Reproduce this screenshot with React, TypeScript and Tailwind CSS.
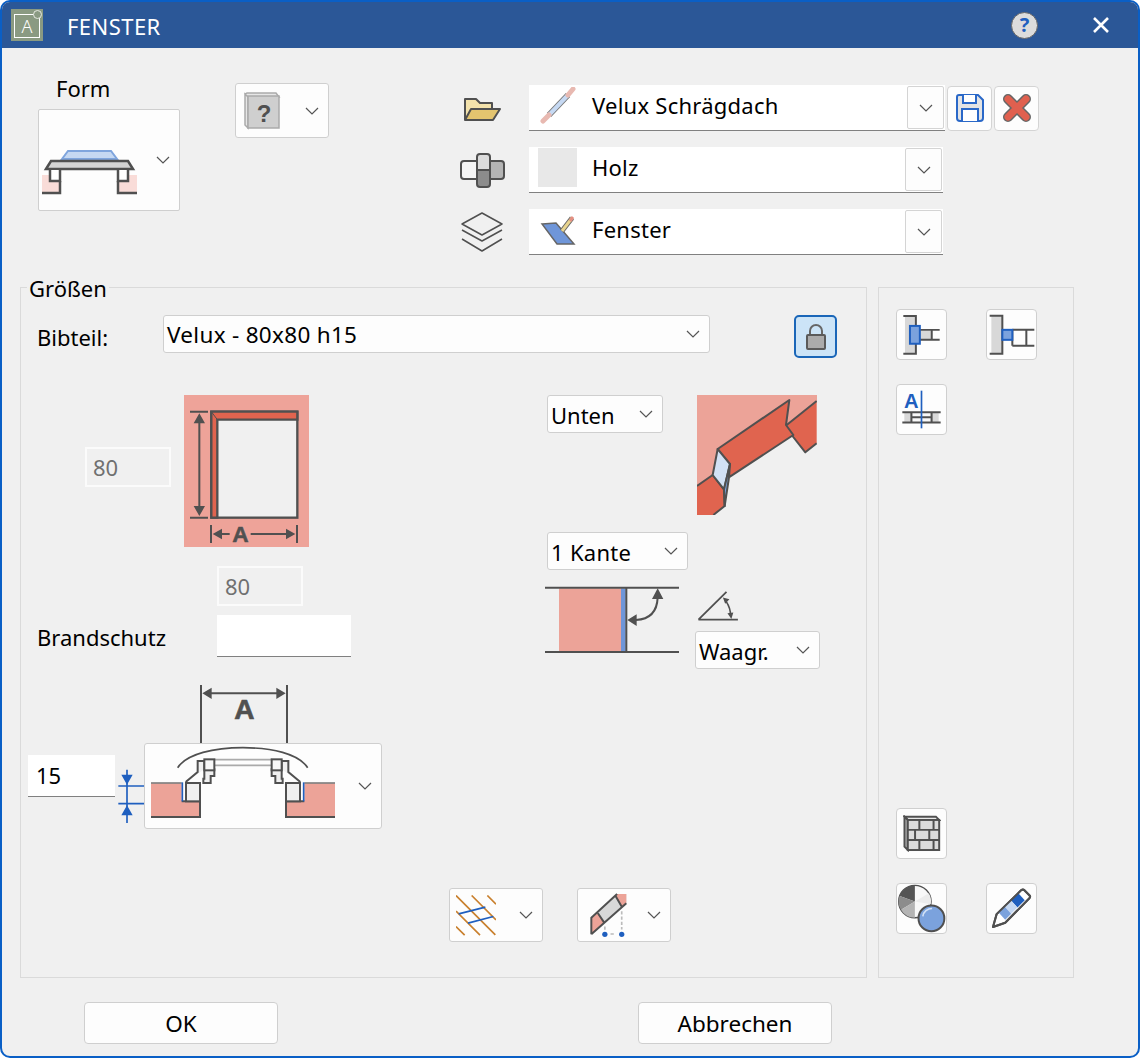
import type { ReactNode } from 'react'

const Chevron = ({ className = '' }: { className?: string }) => (
  <svg viewBox="0 0 14 8" className={`w-[14px] h-[8px] shrink-0 ${className}`} fill="none" stroke="#555" strokeWidth="1.2">
    <path d="M1 1l6 6 6-6" />
  </svg>
)

function Select({ label, className }: { label: string; className: string }) {
  return (
    <div className={`flex items-center justify-between bg-[#fdfdfd] border border-[#cfcfcf] rounded-[3px] pl-[3px] ${className}`}>
      <span className="pt-[1px]">{label}</span>
      <Chevron />
    </div>
  )
}

function IconCombo({ children, className }: { children: ReactNode; className: string }) {
  return (
    <div className={`flex items-center justify-between bg-[#fdfdfd] border border-[#cfcfcf] rounded-[3px] ${className}`}>
      {children}
      <Chevron />
    </div>
  )
}

function Field({ icon, label, wide }: { icon: ReactNode; label: string; wide?: boolean }) {
  return (
    <div className={`flex items-center bg-white border-b border-[#808080] h-[46px] ${wide ? 'w-[416px]' : 'w-[414px]'}`}>
      <div className="w-[63px] flex pl-[9px]">{icon}</div>
      <span className="mb-[6px] tracking-[0.25px]">{label}</span>
      <div className="ml-auto w-[37px] h-[43px] flex items-center justify-center border border-[#d4d4d4] rounded-[2px] bg-[#fdfdfd] mr-[1px]">
        <Chevron />
      </div>
    </div>
  )
}

function ToolButton({ children }: { children: ReactNode }) {
  return (
    <button className="w-[51px] h-[51px] flex items-center justify-center bg-[#fdfdfd] border border-[#cfcfcf] rounded-[4px]">
      {children}
    </button>
  )
}

const disabledInput = 'w-[86px] h-[40px] bg-[#f0f0f0] border-2 border-[#fbfbfb] px-[6px] text-[#707070] outline-none'
const whiteInput = 'bg-white border-b border-[#808080] outline-none'
const dark = '#505050'

const WindowForm = () => (
  <svg viewBox="42 148 96 48" className="w-[96px] h-[48px]" fill="none" stroke={dark} strokeWidth="2.5">
    <rect x="42" y="175" width="18" height="18" fill="#f9dcd8" stroke="none" />
    <rect x="119" y="175" width="18" height="18" fill="#f9dcd8" stroke="none" />
    <path d="M62 159l6-8h43l6 8z" fill="#c5d8f2" stroke="#7fa5dd" strokeWidth="2" />
    <path d="M46 169l5-8h77l5 8z" fill="#d4d4d4" />
    <path d="M50 170v11h10v-11M118 170v11h10v-11" fill="#fff" />
    <path d="M60 181v12H42M118 181v12h19" />
  </svg>
)

const QuestionCube = () => (
  <svg viewBox="0 0 38 38" className="w-[38px] h-[38px]">
    <path d="M1 2l3 3h31l-3-4H3z M1 2v31l3 3V5z" fill="#e6e6e6" stroke="#aaa" strokeWidth="1.5" />
    <rect x="4" y="4" width="31" height="32" fill="#cfcfcf" stroke="#aaa" strokeWidth="1.5" />
    <text x="20" y="30" textAnchor="middle" fontFamily="Liberation Sans" fontWeight="700" fontSize="24" fill="#505050">?</text>
  </svg>
)

const FolderIcon = () => (
  <svg viewBox="462 97 38 26" className="w-[38px] h-[26px]" stroke={dark} strokeWidth="2" strokeLinejoin="round">
    <path d="M464 120V99h11l4 4h12v6" fill="#f3e2ab" />
    <path d="M464 120l6-11h29l-7 11z" fill="#e3c46f" />
  </svg>
)

const MaterialIcon = () => (
  <svg viewBox="458 151 46 37" className="w-[46px] h-[37px]" stroke={dark} strokeWidth="2">
    <path d="M476 160h-13a3 3 0 0 0-3 3v12a3 3 0 0 0 3 3h13z" fill="#f4f4f4" />
    <path d="M488 160h12a3 3 0 0 1 3 3v12a3 3 0 0 1-3 3h-12z" fill="#b4b4b4" />
    <path d="M476 169v-13a3 3 0 0 1 3-3h7a3 3 0 0 1 3 3v13z" fill="#dcdcdc" />
    <path d="M476 169v14a3 3 0 0 0 3 3h7a3 3 0 0 0 3-3v-14z" fill="#8c8c8c" />
  </svg>
)

const LayersIcon = () => (
  <svg viewBox="460 213 42 40" className="w-[42px] h-[40px]" fill="none" stroke={dark} strokeWidth="1.5" strokeLinejoin="round">
    <path d="M481 214l20 11-20 11-20-11z" />
    <path d="M461 231l20 11 20-11" />
    <path d="M461 240l20 12 20-12" />
  </svg>
)

const WandIcon = () => (
  <svg viewBox="540 87 38 38" className="w-[38px] h-[38px] ml-[2px] -mt-[4px]">
    <path d="M549 115l19-20" stroke="#777" strokeWidth="6" />
    <path d="M549 115l19-20" stroke="#c6d9f3" strokeWidth="4" />
    <path d="M543 121l6-6M568 95l5-6" stroke="#e8b9b1" strokeWidth="5" strokeLinecap="round" />
  </svg>
)

const LayerPen = () => (
  <svg viewBox="540 210 38 32" className="w-[38px] h-[32px] ml-[2px] -mt-[4px]">
    <path d="M542 220l14-1 18 21h-17z" fill="#6f96d9" stroke="#666" strokeWidth="1.5" />
    <path d="M562 227l10-13" stroke="#666" strokeWidth="5" />
    <path d="M562 227l10-13" stroke="#e8d48f" strokeWidth="3" />
    <path d="M570 217l3-4" stroke="#e58f82" strokeWidth="3" />
  </svg>
)

const LockIcon = () => (
  <svg viewBox="0 0 20 26" className="w-[20px] h-[26px]">
    <path d="M4 11V7a6 6 0 0 1 12 0v4" fill="none" stroke="#666" strokeWidth="2" />
    <rect x="1" y="11" width="18" height="14" rx="1" fill="#ababab" stroke="#5a5a5a" strokeWidth="2" />
  </svg>
)

const SizePicture = () => (
  <svg viewBox="492 45 375 456" className="w-[125px] h-[152px] shrink-0">
    <rect x="492" y="45" width="375" height="456" fill="#eea399" />
    <rect x="574" y="95" width="258" height="318" fill="#f0f0f0" stroke={dark} strokeWidth="7" />
    <path d="M574 95h258v24H592v294h-18z" fill="#e0644f" stroke={dark} strokeWidth="7" />
    <path d="M574 95l18 24" stroke={dark} strokeWidth="3" />
    <path d="M510 95h54M510 413h54M538 120v270M573 435v54M831 435v54M605 462h24M692 462h110" stroke={dark} strokeWidth="6" fill="none" />
    <path d="M538 100l-17 30h34zM538 408l-17-30h34zM578 462l28-16v32zM826 462l-28-16v32z" fill={dark} />
    <text x="661" y="486" textAnchor="middle" fontFamily="Liberation Sans" fontWeight="700" fontSize="68" fill={dark} stroke={dark} strokeWidth="1.5">A</text>
  </svg>
)

const EdgePicture = () => (
  <svg viewBox="501 45 360 360" className="w-[120px] h-[120px] shrink-0" stroke={dark} strokeWidth="6" strokeLinejoin="round">
    <path d="M501 45h360v20l-90 70-170 117-37-45-15 78-48 33z" fill="#eca398" stroke="none" />
    <path d="M770 135l90-70v125l-34 27-41-52z" fill="#e0644f" stroke="none" />
    <path d="M770 135l90-72M860 190l-34 27-41-52" fill="none" />
    <path d="M563 207L778 60l-10 75 22 30-190 125z" fill="#e0644f" />
    <path d="M501 318l47-33 34 43 2 50-34 27h-49z" fill="#e0644f" stroke="none" />
    <path d="M501 318l47-33 34 43 2 50-34 27" fill="none" />
    <path d="M563 207l37 45-18 76-34-43z" fill="#d2e1f5" />
    <path d="M600 252l-3 40-13 86-2-50z" fill="#7ba2dd" />
  </svg>
)

const AngleDiagram = () => (
  <svg viewBox="45 615 402 204" className="w-[134px] h-[68px] shrink-0">
    <rect x="87" y="622" width="186" height="189" fill="#eca398" />
    <rect x="273" y="622" width="14" height="189" fill="#6f96d9" />
    <path d="M45 620h402M45 813h402M289 620v193" stroke={dark} strokeWidth="6" fill="none" />
    <path d="M383 650c-2 45-25 65-65 67" stroke={dark} strokeWidth="6" fill="none" />
    <path d="M383 622l-17 32h34zM292 717l28-17v35z" fill={dark} />
  </svg>
)

const AngleIcon = () => (
  <svg viewBox="503 628 128 92" className="w-[42px] h-[30px]" fill="none" stroke={dark}>
    <path d="M507 716h121M507 716l86-85" strokeWidth="5.5" />
    <path d="M592 660c10 16 14 28 13 42" strokeWidth="5" />
    <path d="M582 648l20 5-13 14zM608 714l-12-18 18-2z" fill={dark} stroke="none" />
  </svg>
)

const WidthDim = () => (
  <svg viewBox="537 45 270 174" className="w-[90px] h-[58px]">
    <path d="M543 45v174M801 45v174M570 70h205" stroke={dark} strokeWidth="6" fill="none" />
    <path d="M547 70l28-17v34zM797 70l-28-17v34z" fill={dark} />
    <text x="673" y="146" textAnchor="middle" fontFamily="Liberation Sans" fontWeight="700" fontSize="84" fill={dark} stroke={dark} strokeWidth="2">A</text>
  </svg>
)

const HeightDim = () => (
  <svg viewBox="285 290 87 171" className="w-[29px] h-[57px] shrink-0 mt-[24px]">
    <path d="M295 347h77M295 400h77M321 298v160" stroke="#1f5fbf" strokeWidth="5" fill="none" />
    <path d="M321 343l-17-30h34zM321 405l-17 30h34z" fill="#1f5fbf" />
  </svg>
)

const ProfileSide = () => (
  <g strokeLinejoin="miter">
    <path d="M393 338h92v55h55v47H393z" fill="#eca398" stroke="none" />
    <path d="M393 338h92" stroke="#808080" strokeWidth="5" fill="none" />
    <path d="M393 440h147v-47h-55" stroke={dark} strokeWidth="6" fill="none" />
    <path d="M487 336v57" stroke="#1f5fbf" strokeWidth="5" fill="none" />
    <rect x="498" y="338" width="42" height="55" fill="#f0f0f0" stroke={dark} strokeWidth="6" />
    <path d="M497 335l36-30v-33h20v53h-3v13h22v-21h11v-20h-30" fill="#f0f0f0" stroke={dark} strokeWidth="6" />
    <rect x="553" y="267" width="30" height="33" fill="#f8f8f8" stroke={dark} strokeWidth="6" />
  </g>
)

const DomeProfile = () => (
  <svg viewBox="390 224 558 222" className="w-[186px] h-[74px] mb-[9px]">
    <path d="M583 268h172M583 285h172" stroke="#aaa" strokeWidth="5" fill="none" />
    <path d="M473 292c28-42 110-60 196-60s166 18 194 60" stroke={dark} strokeWidth="5" fill="none" />
    <ProfileSide />
    <g transform="translate(1338 0) scale(-1 1)">
      <ProfileSide />
    </g>
  </svg>
)

const HatchIcon = () => (
  <svg viewBox="48 44 120 122" className="w-[40px] h-[41px]" fill="none">
    <path d="M48 45l118 118M95 45l73 73M142 45l26 26M48 92l72 72M48 138l26 26" stroke="#c9802e" strokeWidth="5" />
    <path d="M56 100l80-20M84 128l76-20" stroke="#1f5fbf" strokeWidth="5" />
  </svg>
)

const EraserIcon = () => (
  <svg viewBox="448 38 112 134" className="w-[37px] h-[45px]" strokeLinejoin="round">
    <path d="M452 112l78-72h28v28L452 162z" fill="#d8d8d8" />
    <path d="M452 112l20-14 20 30-40 34z" fill="#eca398" />
    <path d="M525 45l5-5h28v28l-13 12z" fill="#eca398" />
    <path d="M452 162v-50l78-72M452 162l106-94M472 98l20 30M525 45l20 35" stroke={dark} strokeWidth="6" fill="none" />
    <path d="M493 138v16M544 92v55M510 161h16" stroke="#bbb" strokeWidth="5" strokeDasharray="10 6" fill="none" />
    <circle cx="493" cy="162" r="8" fill="#1f5fbf" />
    <circle cx="544" cy="162" r="8" fill="#1f5fbf" />
  </svg>
)

const AlignCenter = () => (
  <svg viewBox="66 55 118 122" className="w-[39px] h-[41px]" fill="none">
    <rect x="75" y="60" width="32" height="114" fill="#d8d8d8" />
    <rect x="120" y="104" width="34" height="26" fill="#d8d8d8" />
    <path d="M70 60h38v114H70M120 102h60M120 132h60M156 102v30" stroke={dark} strokeWidth="6" />
    <rect x="90" y="90" width="30" height="54" fill="#7ba2dd" stroke="#1f5fbf" strokeWidth="6" />
  </svg>
)

const AlignInner = () => (
  <svg viewBox="326 55 138 122" className="w-[46px] h-[41px]" fill="none">
    <rect x="333" y="60" width="33" height="114" fill="#d8d8d8" />
    <path d="M328 60h38v114h-38M396 102h66M396 150h66M396 102v48M438 102v48" stroke={dark} strokeWidth="6" />
    <rect x="366" y="102" width="30" height="30" fill="#7ba2dd" stroke="#1f5fbf" strokeWidth="6" />
  </svg>
)

const AlignText = () => (
  <svg viewBox="62 290 116 116" className="w-[39px] h-[39px]" fill="none">
    <rect x="69" y="357" width="102" height="30" fill="#d8d8d8" />
    <rect x="90" y="357" width="60" height="30" fill="#f8f8f8" />
    <path d="M63 356h114M63 387h114M90 356v31M150 356v31M90 371h60" stroke={dark} strokeWidth="6" />
    <path d="M120 292v112" stroke="#1f5fbf" strokeWidth="5" />
    <text x="90" y="344" textAnchor="middle" fontFamily="Liberation Sans" fontWeight="700" fontSize="60" fill="#1f5fbf">A</text>
  </svg>
)

const BrickIcon = () => (
  <svg viewBox="66 58 114 112" className="w-[38px] h-[37px]" stroke={dark} strokeWidth="6">
    <path d="M70 63l10 10h95l-10-10z" fill="#f0f0f0" />
    <path d="M70 63v91l10 10V73z" fill="#bbb" />
    <rect x="80" y="73" width="95" height="91" fill="#dcdcdc" />
    <path d="M80 103h95M80 134h95M115 73v30M158 73v30M102 103v31M145 103v31M115 134v30M158 134v30" fill="none" />
  </svg>
)

const ColorIcon = () => (
  <svg viewBox="48 264 148 148" className="w-[49px] h-[49px]">
    <circle cx="102" cy="317" r="49" fill="#f8f8f8" stroke={dark} strokeWidth="4" />
    <path d="M102 317V268a49 49 0 0 0-46 32z" fill="#555" />
    <path d="M102 317L56 300a49 49 0 0 0 4 42z" fill="#8c8c8c" />
    <path d="M102 317l-42 25a49 49 0 0 0 42 24z" fill="#b4b4b4" />
    <path d="M102 317l42-25a49 49 0 0 1 6 33z" fill="#ececec" />
    <circle cx="152" cy="368" r="39" fill="#7ba2dd" stroke={dark} strokeWidth="6" />
    <path d="M126 362c2-14 14-24 28-24" stroke="#d2e1f5" strokeWidth="5" fill="none" />
  </svg>
)

const PencilIcon = () => (
  <svg viewBox="332 276 124 122" className="w-[41px] h-[41px]" stroke={dark} strokeWidth="6" strokeLinejoin="round">
    <path d="M349 354l74-72c4-3 7-3 10 0l15 15c3 3 3 6 0 9l-73 74-37 13z" fill="#fff" />
    <path d="M392 312l22-22 20 22-22 22z" fill="#1f5fbf" stroke="none" />
    <path d="M373 331l19-19 20 22-19 19z" fill="#c6d9f3" stroke="none" />
    <path d="M355 349l18-18 20 22-18 18z" fill="#7ba2dd" stroke="none" />
    <path d="M349 354l74-72c4-3 7-3 10 0l15 15c3 3 3 6 0 9l-73 74-37 13z" fill="none" />
  </svg>
)

export default function App() {
  return (
    <div className="w-[1140px] h-[1058px] flex flex-col bg-[#f0f0f0] border-2 border-[#0a5fc6] rounded-[10px] overflow-hidden text-[22px] leading-[28px] text-black font-['Noto_Sans','Open_Sans',sans-serif]">
      <div className="h-[46px] shrink-0 flex items-center bg-[#2b5797] text-white">
        <div className="relative ml-[9px] w-[32px] h-[32px] bg-[#8a9a82] flex items-center justify-center">
          <div className="w-[26px] h-[24px] border border-white text-[18px] flex items-center justify-center font-light mt-[1px]">A</div>
          <span className="absolute right-[1px] top-[1px] w-[9px] h-[9px] rounded-full border border-[#e4e8e0] bg-[#8a9a82]" />
        </div>
        <span className="ml-[24px] mt-[1px] tracking-[0.45px]">FENSTER</span>
        <div className="ml-auto w-[27px] h-[27px] rounded-full bg-[#dcdcdc] border border-[#666] text-[#1f5fbf] font-bold text-[20px] flex items-center justify-center">?</div>
        <svg viewBox="0 0 16 16" className="ml-[55px] mr-[29px] w-[16px] h-[16px]" stroke="#fff" strokeWidth="2.6">
          <path d="M1 1l14 14M15 1L1 15" />
        </svg>
      </div>

      <div className="h-[239px] shrink-0 flex">
        <div className="ml-[36px] w-[142px]">
          <div className="mt-[26px] mb-[7px] pl-[18px]">Form</div>
          <div className="w-[142px] h-[102px] flex items-end justify-between bg-[#fdfdfd] border border-[#cfcfcf] rounded-[2px] pl-[3px] pr-[9px] pb-[14px]">
            <WindowForm />
            <Chevron className="mb-[32px]" />
          </div>
        </div>
        <IconCombo className="ml-[55px] mt-[35px] w-[94px] h-[55px] pl-[8px] pr-[9px]">
          <QuestionCube />
        </IconCombo>
        <div className="ml-[126px] mt-[37px] flex flex-col gap-[16px]">
          <div className="flex items-center">
            <div className="w-[74px] pl-[8px] mt-[4px]"><FolderIcon /></div>
            <Field wide icon={<WandIcon />} label="Velux Schrägdach" />
            <button className="ml-[2px] w-[45px] h-[45px] flex items-center justify-center bg-[#fdfdfd] border border-[#d4d4d4] rounded-[4px]">
              <svg viewBox="0 0 28 28" className="w-[28px] h-[28px]" fill="#e4e4e4" stroke="#2a68c8" strokeWidth="2">
                <path d="M3 1h19l5 5v18a3 3 0 0 1-3 3H4a3 3 0 0 1-3-3V3a2 2 0 0 1 2-2z" />
                <path d="M7 1v8h13V1M6 27V15h16v12" fill="#fff" />
              </svg>
            </button>
            <button className="ml-[2px] w-[45px] h-[45px] flex items-center justify-center bg-[#fdfdfd] border border-[#d4d4d4] rounded-[4px]">
              <svg viewBox="0 0 30 30" className="w-[30px] h-[30px]" fill="none">
                <path d="M6 6l18 18M24 6L6 24" stroke="#666" strokeWidth="10" strokeLinecap="round" />
                <path d="M6 6l18 18M24 6L6 24" stroke="#e0604f" strokeWidth="7" strokeLinecap="round" />
              </svg>
            </button>
          </div>
          <div className="flex items-center">
            <div className="w-[74px] pl-[4px]"><MaterialIcon /></div>
            <Field icon={<div className="w-[39px] h-[39px] bg-[#e8e8e8] -mt-[4px]" />} label="Holz" />
          </div>
          <div className="flex items-center">
            <div className="w-[74px] pl-[6px]"><LayersIcon /></div>
            <Field icon={<LayerPen />} label="Fenster" />
          </div>
        </div>
      </div>

      <div className="h-[691px] shrink-0 flex ml-[18px] gap-[11px]">
        <div className="relative w-[847px] flex flex-col border border-[#dadada]">
          <span className="absolute left-[6px] top-[-14px] px-[2px] bg-[#f0f0f0]">Größen</span>
          <div className="mt-[27px] flex items-start">
            <span className="ml-[16px] w-[126px] leading-[42px] pt-[1px]">Bibteil:</span>
            <Select label="Velux - 80x80 h15" className="w-[547px] h-[38px] pr-[9px] text-[22.5px] tracking-[0.3px]" />
            <button className="ml-[84px] w-[43px] h-[43px] flex items-center justify-center bg-[#cce4f7] border-2 border-[#1a66b8] rounded-[5px]">
              <LockIcon />
            </button>
          </div>

          <div className="mt-[37px] flex">
            <div className="w-[524px] flex flex-col">
              <div className="flex">
                <input readOnly defaultValue="80" className={`${disabledInput} ml-[64px] mt-[52px]`} />
                <div className="ml-[13px]"><SizePicture /></div>
              </div>
              <input readOnly defaultValue="80" className={`${disabledInput} ml-[196px] mt-[19px]`} />
              <div className="mt-[9px] flex items-center">
                <span className="ml-[16px] w-[180px] pt-[2px]">Brandschutz</span>
                <input readOnly className={`${whiteInput} w-[134px] h-[42px]`} />
              </div>
              <div className="mt-[28px] ml-[178px]"><WidthDim /></div>
              <div className="ml-[7px] flex">
                <input readOnly defaultValue="15" className={`${whiteInput} w-[87px] h-[42px] mt-[12px] px-[8px] pb-[2px]`} />
                <HeightDim />
                <IconCombo className="w-[238px] h-[86px] pl-[5px] pr-[9px]">
                  <DomeProfile />
                </IconCombo>
              </div>
            </div>

            <div className="flex flex-col">
              <div className="flex items-start">
                <Select label="Unten" className="ml-[2px] w-[116px] h-[38px] pr-[9px]" />
                <div className="ml-[34px]"><EdgePicture /></div>
              </div>
              <Select label="1 Kante" className="ml-[2px] mt-[17px] w-[141px] h-[38px] pr-[9px] tracking-[0.3px]" />
              <div className="mt-[16px] flex items-start">
                <AngleDiagram />
                <div className="ml-[16px]">
                  <div className="ml-[2px] mt-[5px]"><AngleIcon /></div>
                  <Select label="Waagr." className="mt-[10px] w-[125px] h-[38px] pr-[9px]" />
                </div>
              </div>
            </div>
          </div>

          <div className="mt-[59px] ml-[428px] flex gap-[34px]">
            <IconCombo className="w-[94px] h-[54px] pl-[6px] pr-[9px]"><HatchIcon /></IconCombo>
            <IconCombo className="w-[94px] h-[54px] pl-[12px] pr-[9px]"><EraserIcon /></IconCombo>
          </div>
        </div>

        <div className="w-[196px] flex flex-col justify-between border border-[#dadada] pt-[21px] pb-[43px] pl-[17px]">
          <div className="grid grid-cols-[51px_51px] gap-x-[39px] gap-y-[24px]">
            <ToolButton><AlignCenter /></ToolButton>
            <ToolButton><AlignInner /></ToolButton>
            <ToolButton><AlignText /></ToolButton>
          </div>
          <div className="grid grid-cols-[51px_51px] gap-x-[39px] gap-y-[24px]">
            <ToolButton><BrickIcon /></ToolButton>
            <div />
            <ToolButton><ColorIcon /></ToolButton>
            <ToolButton><PencilIcon /></ToolButton>
          </div>
        </div>
      </div>

      <div className="mt-[24px] ml-[82px] flex gap-[360px] text-[22.5px]">
        <button className="w-[194px] h-[42px] pt-[2px] bg-[#fdfdfd] border border-[#cfcfcf] rounded-[4px]">OK</button>
        <button className="w-[194px] h-[42px] pt-[2px] bg-[#fdfdfd] border border-[#cfcfcf] rounded-[4px]">Abbrechen</button>
      </div>
    </div>
  )
}
